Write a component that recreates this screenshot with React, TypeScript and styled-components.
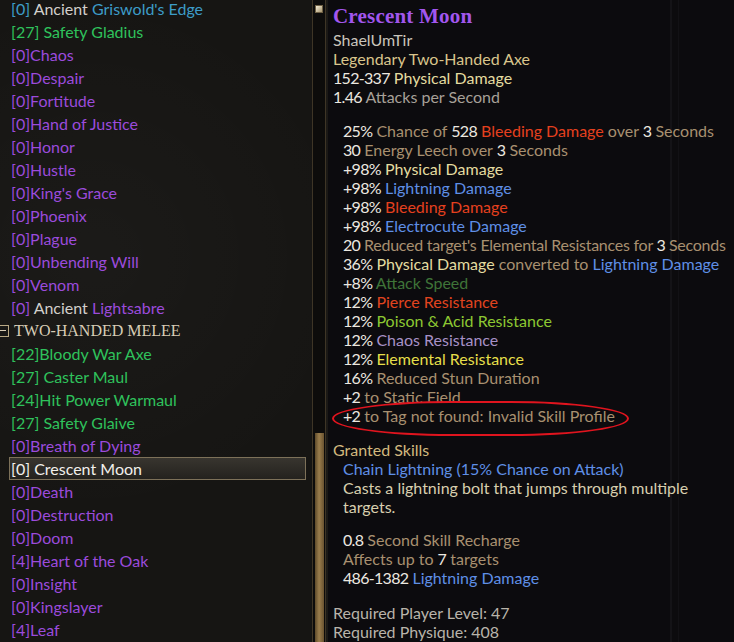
import React from 'react';
import styled, { createGlobalStyle } from 'styled-components';

const GlobalStyle = createGlobalStyle`
  html, body {
    margin: 0;
    padding: 0;
    background: #0c0b0d;
  }
`;

const UI_FONT = `Lato, 'Open Sans', sans-serif`;

type Tone =
  | 'legendary'
  | 'magic'
  | 'rare'
  | 'ancient'
  | 'selected';

const toneColor: Record<Tone, string> = {
  legendary: '#9b4bdc',
  magic: '#2fc25c',
  rare: '#3d9cc8',
  ancient: '#d2cfcb',
  selected: '#f2f0ec',
};

const Screen = styled.div`
  width: 734px;
  height: 642px;
  display: flex;
  overflow: hidden;
  font-family: ${UI_FONT};
`;

const ListPanel = styled.div`
  width: 312px;
  flex-shrink: 0;
  background:
    radial-gradient(circle at 30% 40%, rgba(255, 255, 255, 0.025), transparent 60%),
    #161513;
  overflow: hidden;
`;

const ListBody = styled.div`
  margin-top: -3px;
  display: flex;
  flex-direction: column;
`;

const Row = styled.div<{ $tone: Tone }>`
  height: 23px;
  line-height: 23px;
  padding-left: 11px;
  font-size: 16px;
  color: ${p => toneColor[p.$tone]};
  white-space: nowrap;
`;

const SelectedRow = styled.div`
  height: 21px;
  line-height: 21px;
  margin: 0 6px 0 9px;
  padding-left: 1px;
  font-size: 16px;
  color: ${toneColor.selected};
  border: 1px solid #7d7159;
  background: linear-gradient(#38352f, #24221e);
  white-space: nowrap;
`;

const Plain = styled.span<{ $tone: Tone }>`
  color: ${p => toneColor[p.$tone]};
`;

const HeaderRow = styled.div`
  height: 23px;
  display: flex;
  align-items: center;
  gap: 5px;
  font-family: 'Liberation Serif', serif;
  font-size: 16px;
  color: #d8cdb6;
  white-space: nowrap;
`;

const CollapseBox = styled.span`
  width: 8px;
  height: 10px;
  border: 1px solid #b8a884;
  border-left: none;
  display: flex;
  align-items: center;
  &::after {
    content: '';
    display: block;
    width: 6px;
    height: 1px;
    background: #d8cdb6;
  }
`;

const ScrollTrack = styled.div`
  width: 14px;
  flex-shrink: 0;
  background: #0d0c0b;
  border-left: 1px solid #3e3526;
  border-right: 1px solid #3e3526;
  display: flex;
  flex-direction: column;
  align-items: center;
  padding-top: 5px;
  box-sizing: border-box;
`;

const ScrollButton = styled.div`
  width: 8px;
  height: 8px;
  background: linear-gradient(135deg, #f4ecd6, #a89670);
  border: 1px solid #6d5f44;
  box-sizing: border-box;
`;

const ScrollThumb = styled.div`
  margin-top: auto;
  width: 9px;
  height: 209px;
  background: linear-gradient(90deg, #5e4a2a, #9a7d4c 45%, #6a5330);
`;

const Gutter = styled.div`
  width: 2px;
  flex-shrink: 0;
  background: #1b1916;
`;

const Tooltip = styled.div`
  position: relative;
  flex: 1;
  background:
    linear-gradient(90deg, transparent 342px, #141317 342px, #141317 344px, transparent 344px, transparent 350px, #121115 350px, #121115 351px, transparent 351px),
    #0c0b0e;
  padding: 4px 0 0 5px;
  font-size: 16px;
  color: #a89070;
  display: flex;
  flex-direction: column;
`;

const Title = styled.div`
  font-family: 'Liberation Serif', serif;
  font-weight: bold;
  font-size: 21px;
  line-height: 24px;
  color: #a256ee;
  height: 26px;
  letter-spacing: 0.2px;
`;

const Line = styled.div<{ $color?: string; $tight?: boolean }>`
  height: 19px;
  line-height: 19px;
  white-space: nowrap;
  color: ${p => p.$color || '#a89070'};
  letter-spacing: ${p => (p.$tight ? '-0.25px' : 'normal')};
`;

const Block = styled.div<{ $indent?: boolean; $gap: number }>`
  display: flex;
  flex-direction: column;
  padding-left: ${p => (p.$indent ? '10px' : '0')};
  margin-top: ${p => p.$gap}px;
`;

const V = styled.span<{ $c: string }>`
  color: ${p => p.$c};
`;

// numbers in the game font are set tighter than Lato's digits
const N = styled.span`
  color: #ece8e0;
  letter-spacing: -0.7px;
`;

const Ring = styled.div`
  position: absolute;
  left: 4px;
  top: 401px;
  width: 293px;
  height: 31px;
  border: 2px solid #e0141e;
  border-radius: 40% / 50%;
  pointer-events: none;
`;

const C = {
  tan: '#a89070',
  phys: '#e4dca0',
  light: '#5f8fe6',
  bleed: '#e5401e',
  speed: '#3f7438',
  pierce: '#e1441f',
  poison: '#8cc832',
  chaos: '#a791c6',
  elem: '#e6df4a',
  type: '#d9c58c',
  name: '#c9c4bb',
  gray: '#a7a098',
  req: '#b9b4aa',
  granted: '#d2b97e',
  desc: '#d8cfae',
};

type Item = { lvl: string; name: string; tone: Tone; ancient?: boolean };

const upperItems: Item[] = [
  { lvl: '[0] ', name: "Griswold's Edge", tone: 'rare', ancient: true },
  { lvl: '[27] ', name: 'Safety Gladius', tone: 'magic' },
  { lvl: '[0]', name: 'Chaos', tone: 'legendary' },
  { lvl: '[0]', name: 'Despair', tone: 'legendary' },
  { lvl: '[0]', name: 'Fortitude', tone: 'legendary' },
  { lvl: '[0]', name: 'Hand of Justice', tone: 'legendary' },
  { lvl: '[0]', name: 'Honor', tone: 'legendary' },
  { lvl: '[0]', name: 'Hustle', tone: 'legendary' },
  { lvl: '[0]', name: "King's Grace", tone: 'legendary' },
  { lvl: '[0]', name: 'Phoenix', tone: 'legendary' },
  { lvl: '[0]', name: 'Plague', tone: 'legendary' },
  { lvl: '[0]', name: 'Unbending Will', tone: 'legendary' },
  { lvl: '[0]', name: 'Venom', tone: 'legendary' },
  { lvl: '[0] ', name: 'Lightsabre', tone: 'legendary', ancient: true },
];

const twoHanded: Item[] = [
  { lvl: '[22]', name: 'Bloody War Axe', tone: 'magic' },
  { lvl: '[27] ', name: 'Caster Maul', tone: 'magic' },
  { lvl: '[24]', name: 'Hit Power Warmaul', tone: 'magic' },
  { lvl: '[27] ', name: 'Safety Glaive', tone: 'magic' },
  { lvl: '[0]', name: 'Breath of Dying', tone: 'legendary' },
];

const afterSelected: Item[] = [
  { lvl: '[0]', name: 'Death', tone: 'legendary' },
  { lvl: '[0]', name: 'Destruction', tone: 'legendary' },
  { lvl: '[0]', name: 'Doom', tone: 'legendary' },
  { lvl: '[4]', name: 'Heart of the Oak', tone: 'legendary' },
  { lvl: '[0]', name: 'Insight', tone: 'legendary' },
  { lvl: '[0]', name: 'Kingslayer', tone: 'legendary' },
  { lvl: '[4]', name: 'Leaf', tone: 'legendary' },
];

const ItemRow = ({ item }: { item: Item }) => (
  <Row $tone={item.tone}>
    {item.lvl}
    {item.ancient && <Plain $tone="ancient">Ancient </Plain>}
    {item.name}
  </Row>
);

export default function App() {
  return (
    <>
      <GlobalStyle />
      <Screen>
        <ListPanel>
          <ListBody>
            {upperItems.map(it => (
              <ItemRow key={it.name} item={it} />
            ))}
            <HeaderRow>
              <CollapseBox />
              TWO-HANDED MELEE
            </HeaderRow>
            {twoHanded.map(it => (
              <ItemRow key={it.name} item={it} />
            ))}
            <SelectedRow>[0] Crescent Moon</SelectedRow>
            {afterSelected.map(it => (
              <ItemRow key={it.name} item={it} />
            ))}
          </ListBody>
        </ListPanel>
        <ScrollTrack>
          <ScrollButton />
          <ScrollThumb />
        </ScrollTrack>
        <Gutter />
        <Tooltip>
          <Title>Crescent Moon</Title>
          <Block $gap={0}>
            <Line $color={C.name}>ShaelUmTir</Line>
            <Line $color={C.type}>Legendary Two-Handed Axe</Line>
            <Line>
              <N>152-337</N> <V $c={C.phys}>Physical Damage</V>
            </Line>
            <Line $color={C.gray}>
              <N>1.46</N> Attacks per Second
            </Line>
          </Block>
          <Block $indent $gap={15}>
            <Line>
              <N>25%</N> Chance of <N>528</N> <V $c={C.bleed}>Bleeding Damage</V> over{' '}
              <N>3</N> Seconds
            </Line>
            <Line>
              <N>30</N> Energy Leech over <N>3</N> Seconds
            </Line>
            <Line>
              <N>+98%</N> <V $c={C.phys}>Physical Damage</V>
            </Line>
            <Line>
              <N>+98%</N> <V $c={C.light}>Lightning Damage</V>
            </Line>
            <Line>
              <N>+98%</N> <V $c={C.bleed}>Bleeding Damage</V>
            </Line>
            <Line>
              <N>+98%</N> <V $c={C.light}>Electrocute Damage</V>
            </Line>
            <Line $tight>
              <N>20</N> Reduced target's Elemental Resistances for <N>3</N> Seconds
            </Line>
            <Line>
              <N>36%</N> <V $c={C.phys}>Physical Damage</V> converted to{' '}
              <V $c={C.light}>Lightning Damage</V>
            </Line>
            <Line>
              <N>+8%</N> <V $c={C.speed}>Attack Speed</V>
            </Line>
            <Line>
              <N>12%</N> <V $c={C.pierce}>Pierce Resistance</V>
            </Line>
            <Line>
              <N>12%</N> <V $c={C.poison}>Poison &amp; Acid Resistance</V>
            </Line>
            <Line>
              <N>12%</N> <V $c={C.chaos}>Chaos Resistance</V>
            </Line>
            <Line>
              <N>12%</N> <V $c={C.elem}>Elemental Resistance</V>
            </Line>
            <Line>
              <N>16%</N> Reduced Stun Duration
            </Line>
            <Line>
              <N>+2</N> to Static Field
            </Line>
            <Line>
              <N>+2</N> to Tag not found: Invalid Skill Profile
            </Line>
          </Block>
          <Block $gap={15}>
            <Line $color={C.granted}>Granted Skills</Line>
          </Block>
          <Block $indent $gap={0}>
            <Line $color={C.light}>Chain Lightning (15% Chance on Attack)</Line>
            <Line $color={C.desc}>Casts a lightning bolt that jumps through multiple</Line>
            <Line $color={C.desc}>targets.</Line>
          </Block>
          <Block $indent $gap={14}>
            <Line>
              <N>0.8</N> Second Skill Recharge
            </Line>
            <Line>
              Affects up to <N>7</N> targets
            </Line>
            <Line>
              <N>486-1382</N> <V $c={C.light}>Lightning Damage</V>
            </Line>
          </Block>
          <Block $gap={16}>
            <Line $color={C.req}>Required Player Level: 47</Line>
            <Line $color={C.req}>Required Physique: 408</Line>
          </Block>
          <Ring />
        </Tooltip>
      </Screen>
    </>
  );
}
